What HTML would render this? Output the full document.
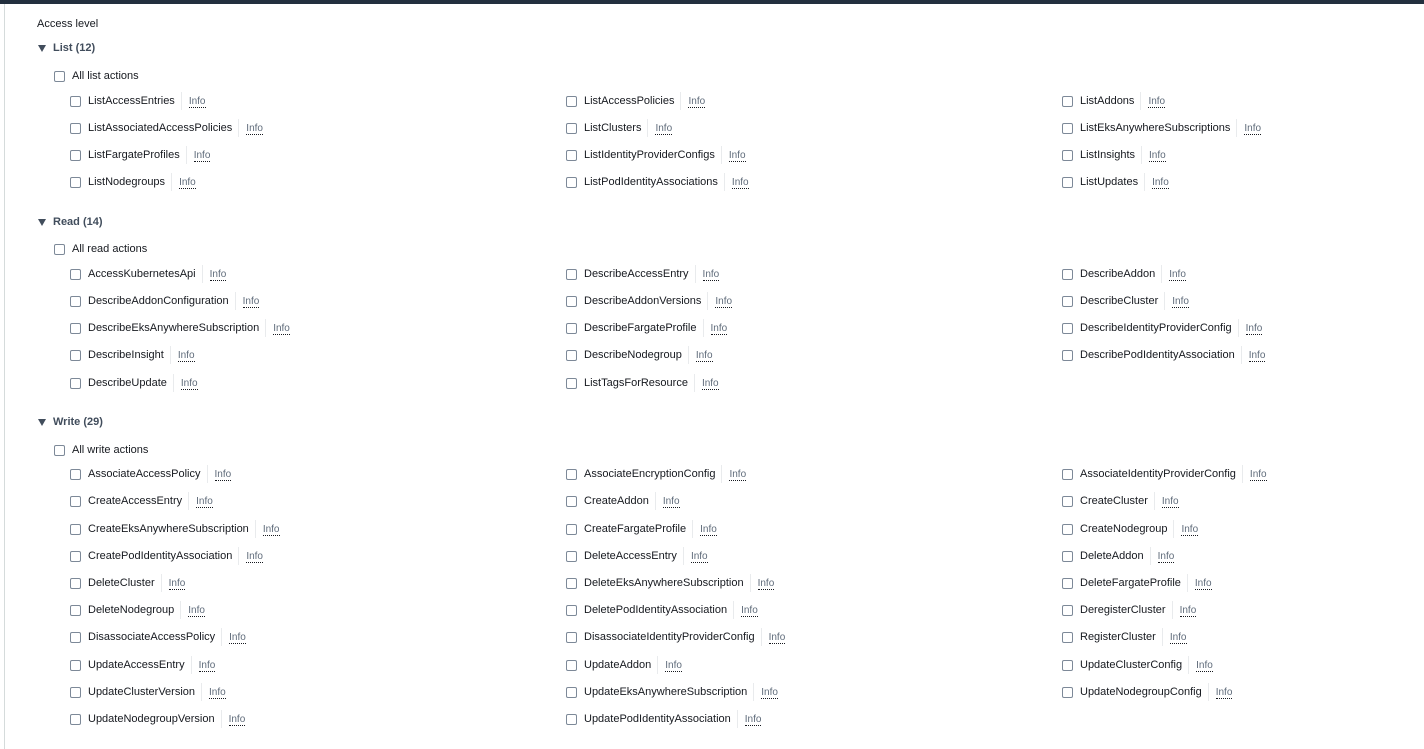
<!DOCTYPE html>
<html><head><meta charset="utf-8"><style>
body{margin:0;width:1424px;height:749px;background:#fff;position:relative;overflow:hidden;font-family:"Liberation Sans",sans-serif;color:#16191f;font-size:11px}
.top{position:absolute;left:0;top:0;width:1424px;height:4px;background:#232f3e}
.vl{position:absolute;left:4px;top:4px;width:1px;height:745px;background:#d5dbdb}
.r{position:absolute;height:18px;display:flex;align-items:center;white-space:nowrap;margin-top:1px}
.cb{width:9px;height:9px;border:1px solid #7d8998;border-radius:2px;margin-right:7px;background:#fff}
.sep{width:1px;height:18px;background:#e9ebed;margin:0 7px 0 6px}
.i{font-size:10px;color:#5f6b7a;border-bottom:1px dotted #16191f;line-height:11px;margin-top:2px}
.h{font-weight:bold;color:#414d5c}
.tri{width:0;height:0;border-left:4px solid transparent;border-right:4px solid transparent;border-top:7px solid #414d5c;margin-right:7px}
</style></head><body>
<div class="top"></div><div class="vl"></div>
<div class="r" style="left:37px;top:14px">Access level</div>

<div class="r h" style="left:38px;top:38px"><div class="tri"></div>List (12)</div>
<div class="r" style="left:54px;top:66px"><div class="cb"></div>All list actions</div>
<div class="r" style="left:70px;top:91px"><div class="cb"></div>ListAccessEntries<div class="sep"></div><span class="i">Info</span></div>
<div class="r" style="left:566px;top:91px"><div class="cb"></div>ListAccessPolicies<div class="sep"></div><span class="i">Info</span></div>
<div class="r" style="left:1062px;top:91px"><div class="cb"></div>ListAddons<div class="sep"></div><span class="i">Info</span></div>
<div class="r" style="left:70px;top:118px"><div class="cb"></div>ListAssociatedAccessPolicies<div class="sep"></div><span class="i">Info</span></div>
<div class="r" style="left:566px;top:118px"><div class="cb"></div>ListClusters<div class="sep"></div><span class="i">Info</span></div>
<div class="r" style="left:1062px;top:118px"><div class="cb"></div>ListEksAnywhereSubscriptions<div class="sep"></div><span class="i">Info</span></div>
<div class="r" style="left:70px;top:145px"><div class="cb"></div>ListFargateProfiles<div class="sep"></div><span class="i">Info</span></div>
<div class="r" style="left:566px;top:145px"><div class="cb"></div>ListIdentityProviderConfigs<div class="sep"></div><span class="i">Info</span></div>
<div class="r" style="left:1062px;top:145px"><div class="cb"></div>ListInsights<div class="sep"></div><span class="i">Info</span></div>
<div class="r" style="left:70px;top:172px"><div class="cb"></div>ListNodegroups<div class="sep"></div><span class="i">Info</span></div>
<div class="r" style="left:566px;top:172px"><div class="cb"></div>ListPodIdentityAssociations<div class="sep"></div><span class="i">Info</span></div>
<div class="r" style="left:1062px;top:172px"><div class="cb"></div>ListUpdates<div class="sep"></div><span class="i">Info</span></div>

<div class="r h" style="left:38px;top:212px"><div class="tri"></div>Read (14)</div>
<div class="r" style="left:54px;top:239px"><div class="cb"></div>All read actions</div>
<div class="r" style="left:70px;top:264px"><div class="cb"></div>AccessKubernetesApi<div class="sep"></div><span class="i">Info</span></div>
<div class="r" style="left:566px;top:264px"><div class="cb"></div>DescribeAccessEntry<div class="sep"></div><span class="i">Info</span></div>
<div class="r" style="left:1062px;top:264px"><div class="cb"></div>DescribeAddon<div class="sep"></div><span class="i">Info</span></div>
<div class="r" style="left:70px;top:291px"><div class="cb"></div>DescribeAddonConfiguration<div class="sep"></div><span class="i">Info</span></div>
<div class="r" style="left:566px;top:291px"><div class="cb"></div>DescribeAddonVersions<div class="sep"></div><span class="i">Info</span></div>
<div class="r" style="left:1062px;top:291px"><div class="cb"></div>DescribeCluster<div class="sep"></div><span class="i">Info</span></div>
<div class="r" style="left:70px;top:318px"><div class="cb"></div>DescribeEksAnywhereSubscription<div class="sep"></div><span class="i">Info</span></div>
<div class="r" style="left:566px;top:318px"><div class="cb"></div>DescribeFargateProfile<div class="sep"></div><span class="i">Info</span></div>
<div class="r" style="left:1062px;top:318px"><div class="cb"></div>DescribeIdentityProviderConfig<div class="sep"></div><span class="i">Info</span></div>
<div class="r" style="left:70px;top:345px"><div class="cb"></div>DescribeInsight<div class="sep"></div><span class="i">Info</span></div>
<div class="r" style="left:566px;top:345px"><div class="cb"></div>DescribeNodegroup<div class="sep"></div><span class="i">Info</span></div>
<div class="r" style="left:1062px;top:345px"><div class="cb"></div>DescribePodIdentityAssociation<div class="sep"></div><span class="i">Info</span></div>
<div class="r" style="left:70px;top:373px"><div class="cb"></div>DescribeUpdate<div class="sep"></div><span class="i">Info</span></div>
<div class="r" style="left:566px;top:373px"><div class="cb"></div>ListTagsForResource<div class="sep"></div><span class="i">Info</span></div>

<div class="r h" style="left:38px;top:412px"><div class="tri"></div>Write (29)</div>
<div class="r" style="left:54px;top:440px"><div class="cb"></div>All write actions</div>
<div class="r" style="left:70px;top:464px"><div class="cb"></div>AssociateAccessPolicy<div class="sep"></div><span class="i">Info</span></div>
<div class="r" style="left:566px;top:464px"><div class="cb"></div>AssociateEncryptionConfig<div class="sep"></div><span class="i">Info</span></div>
<div class="r" style="left:1062px;top:464px"><div class="cb"></div>AssociateIdentityProviderConfig<div class="sep"></div><span class="i">Info</span></div>
<div class="r" style="left:70px;top:491px"><div class="cb"></div>CreateAccessEntry<div class="sep"></div><span class="i">Info</span></div>
<div class="r" style="left:566px;top:491px"><div class="cb"></div>CreateAddon<div class="sep"></div><span class="i">Info</span></div>
<div class="r" style="left:1062px;top:491px"><div class="cb"></div>CreateCluster<div class="sep"></div><span class="i">Info</span></div>
<div class="r" style="left:70px;top:519px"><div class="cb"></div>CreateEksAnywhereSubscription<div class="sep"></div><span class="i">Info</span></div>
<div class="r" style="left:566px;top:519px"><div class="cb"></div>CreateFargateProfile<div class="sep"></div><span class="i">Info</span></div>
<div class="r" style="left:1062px;top:519px"><div class="cb"></div>CreateNodegroup<div class="sep"></div><span class="i">Info</span></div>
<div class="r" style="left:70px;top:546px"><div class="cb"></div>CreatePodIdentityAssociation<div class="sep"></div><span class="i">Info</span></div>
<div class="r" style="left:566px;top:546px"><div class="cb"></div>DeleteAccessEntry<div class="sep"></div><span class="i">Info</span></div>
<div class="r" style="left:1062px;top:546px"><div class="cb"></div>DeleteAddon<div class="sep"></div><span class="i">Info</span></div>
<div class="r" style="left:70px;top:573px"><div class="cb"></div>DeleteCluster<div class="sep"></div><span class="i">Info</span></div>
<div class="r" style="left:566px;top:573px"><div class="cb"></div>DeleteEksAnywhereSubscription<div class="sep"></div><span class="i">Info</span></div>
<div class="r" style="left:1062px;top:573px"><div class="cb"></div>DeleteFargateProfile<div class="sep"></div><span class="i">Info</span></div>
<div class="r" style="left:70px;top:600px"><div class="cb"></div>DeleteNodegroup<div class="sep"></div><span class="i">Info</span></div>
<div class="r" style="left:566px;top:600px"><div class="cb"></div>DeletePodIdentityAssociation<div class="sep"></div><span class="i">Info</span></div>
<div class="r" style="left:1062px;top:600px"><div class="cb"></div>DeregisterCluster<div class="sep"></div><span class="i">Info</span></div>
<div class="r" style="left:70px;top:627px"><div class="cb"></div>DisassociateAccessPolicy<div class="sep"></div><span class="i">Info</span></div>
<div class="r" style="left:566px;top:627px"><div class="cb"></div>DisassociateIdentityProviderConfig<div class="sep"></div><span class="i">Info</span></div>
<div class="r" style="left:1062px;top:627px"><div class="cb"></div>RegisterCluster<div class="sep"></div><span class="i">Info</span></div>
<div class="r" style="left:70px;top:655px"><div class="cb"></div>UpdateAccessEntry<div class="sep"></div><span class="i">Info</span></div>
<div class="r" style="left:566px;top:655px"><div class="cb"></div>UpdateAddon<div class="sep"></div><span class="i">Info</span></div>
<div class="r" style="left:1062px;top:655px"><div class="cb"></div>UpdateClusterConfig<div class="sep"></div><span class="i">Info</span></div>
<div class="r" style="left:70px;top:682px"><div class="cb"></div>UpdateClusterVersion<div class="sep"></div><span class="i">Info</span></div>
<div class="r" style="left:566px;top:682px"><div class="cb"></div>UpdateEksAnywhereSubscription<div class="sep"></div><span class="i">Info</span></div>
<div class="r" style="left:1062px;top:682px"><div class="cb"></div>UpdateNodegroupConfig<div class="sep"></div><span class="i">Info</span></div>
<div class="r" style="left:70px;top:709px"><div class="cb"></div>UpdateNodegroupVersion<div class="sep"></div><span class="i">Info</span></div>
<div class="r" style="left:566px;top:709px"><div class="cb"></div>UpdatePodIdentityAssociation<div class="sep"></div><span class="i">Info</span></div>
</body></html>
